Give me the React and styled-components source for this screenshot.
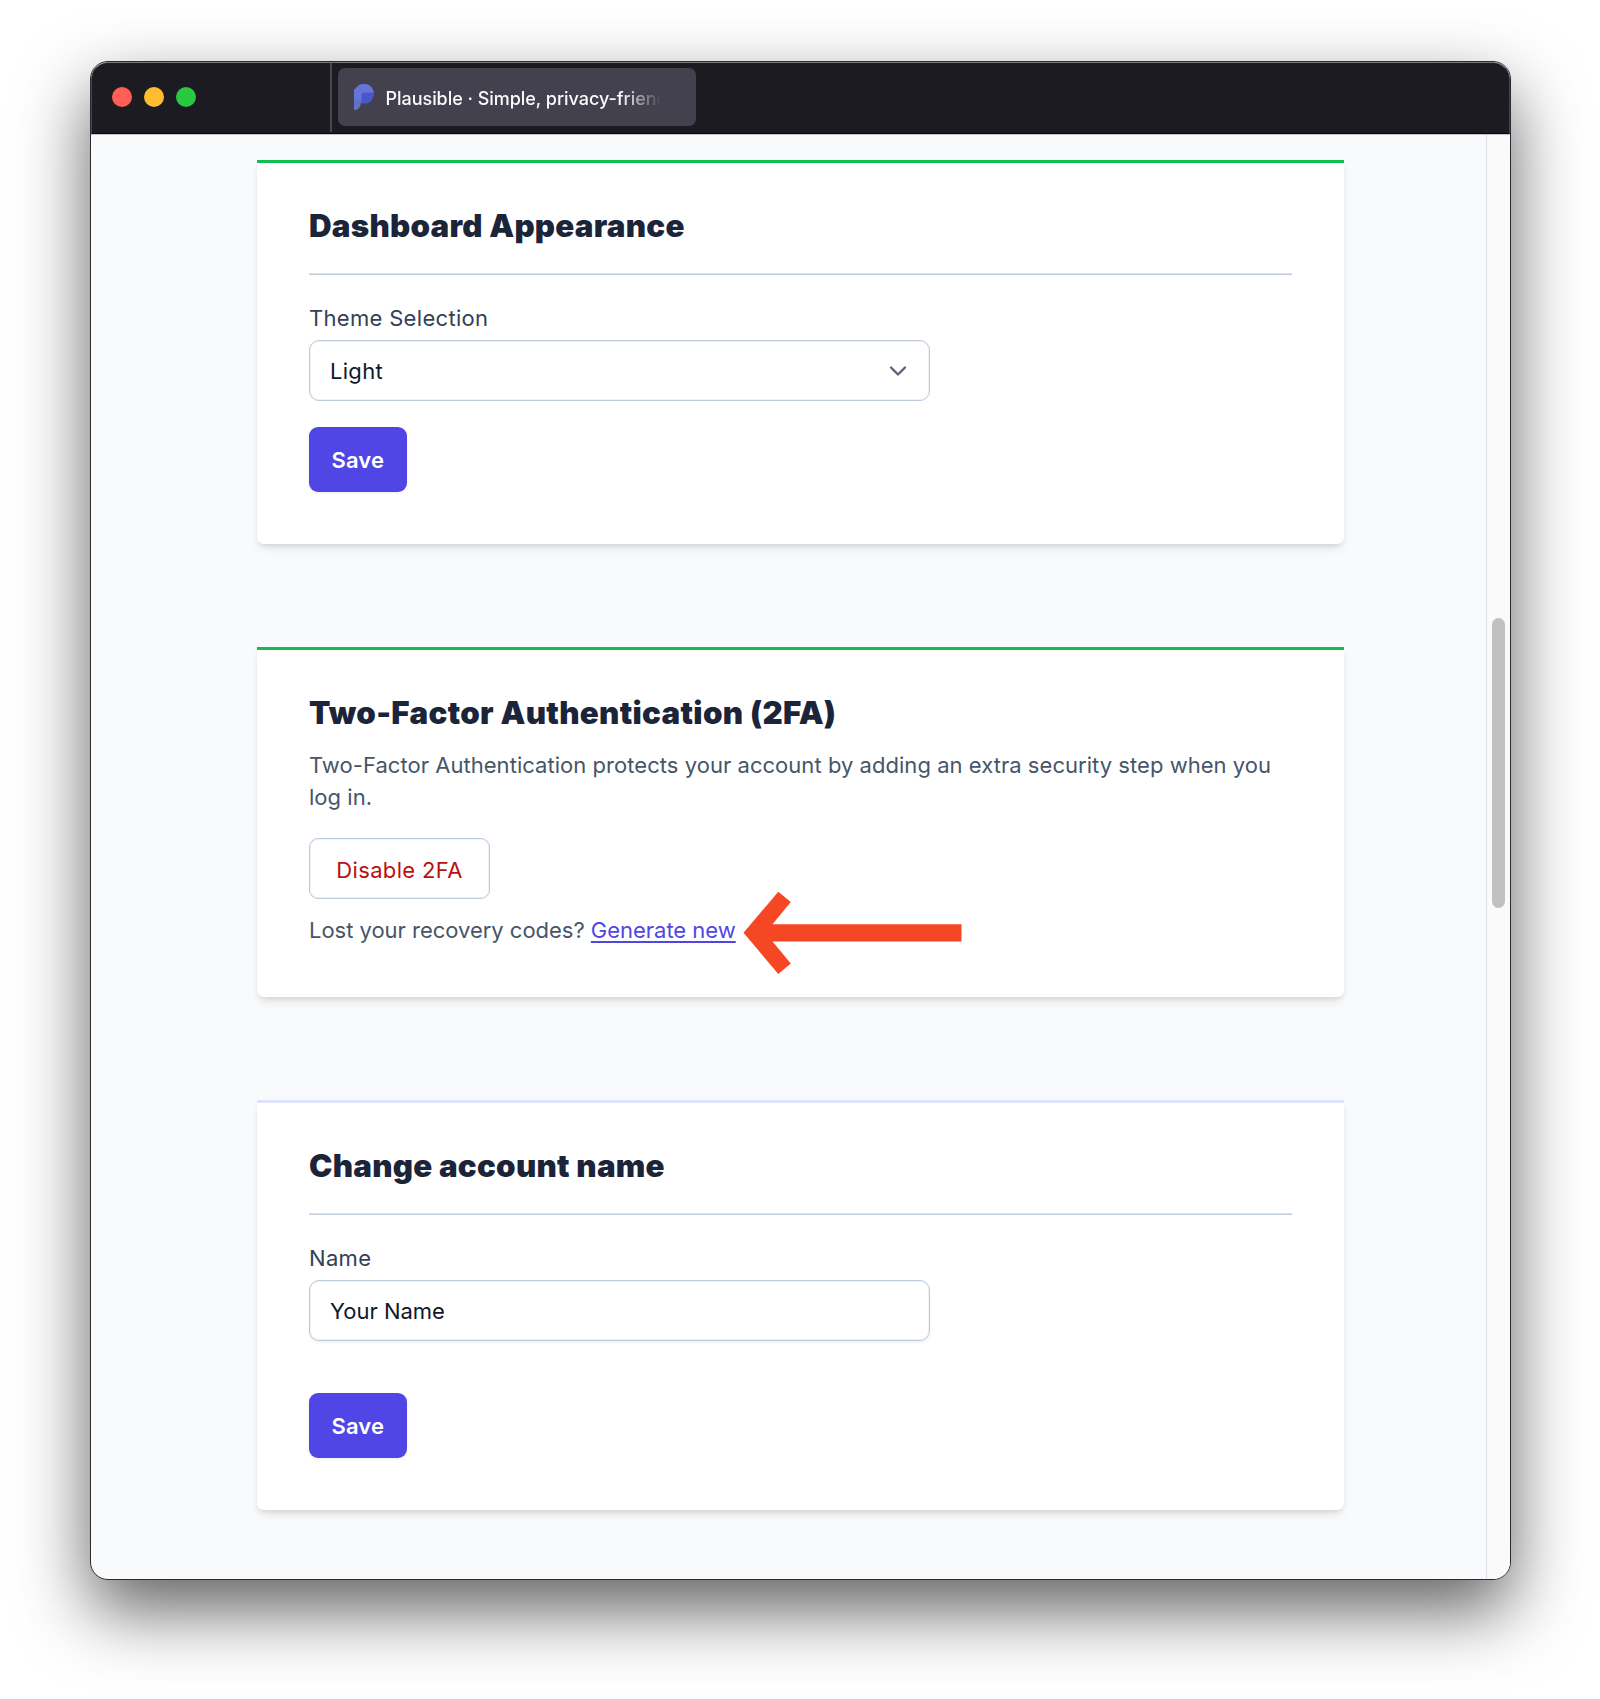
import React from "react";
import styled, { createGlobalStyle } from "styled-components";

const Global = createGlobalStyle`
  *, *::before, *::after { box-sizing: border-box; }
  body {
    margin: 0;
    background: #fff;
    font-family: Inter, "Liberation Sans", sans-serif;
    -webkit-font-smoothing: antialiased;
  }
  h2, p { margin: 0; }
  button { font: inherit; margin: 0; padding: 0; }
`;

const Desktop = styled.div`
  height: 1699px;
  padding: 61px 89px 119px 90px;
  overflow: hidden;
`;

const Window = styled.div`
  width: 1421px;
  height: 1519px;
  border: 1px solid #2b2c31;
  border-radius: 18px;
  overflow: hidden;
  display: flex;
  flex-direction: column;
  background: #f9fafc;
  box-shadow: 0 30px 70px rgba(0, 0, 0, 0.62);
`;

const TitleBar = styled.div`
  flex: none;
  height: 72px;
  display: flex;
  background: #1c1b22;
  border: 1px solid #44454e;
  border-top-color: #77797c;
  border-bottom-color: #09090d;
  border-radius: 17px 17px 0 0;
`;

const Controls = styled.div`
  width: 240px;
  height: 69px;
  display: flex;
  gap: 12.2px;
  padding: 24px 0 0 20px;
  border-right: 2px solid #45464f;
`;

const Dot = styled.span`
  width: 20px;
  height: 20px;
  border-radius: 50%;
  background: ${(p) => p.$color};
`;

const Tab = styled.div`
  display: flex;
  align-items: center;
  width: 358px;
  height: 58px;
  margin: 5px 0 0 6px;
  padding: 0 20px 0 16px;
  border-radius: 7px;
  background: #42414d;
`;

const TabTitle = styled.div`
  flex: none;
  width: 290px;
  margin: 3px 0 0 11.5px;
  white-space: nowrap;
  color: #fbfbfe;
  font-size: 18px;
  line-height: 24px;
  font-weight: 500;
  letter-spacing: -0.04px;
  mask-image: linear-gradient(to right, #000 235px, transparent 275px);
`;

const Viewport = styled.div`
  flex: 1;
  display: flex;
  border-top: 1px solid #c5c5cc;
`;

const Page = styled.main`
  flex: 1;
  padding: 25px 142px 0 166px;
  display: flex;
  flex-direction: column;
  gap: 103px;
`;

const Scrollbar = styled.div`
  width: 24px;
  border-left: 1px solid #dfe0e3;
  background: #fafafa;
  padding: 483px 0 0 5px;
`;

const Thumb = styled.div`
  width: 13px;
  height: 290px;
  border-radius: 7px;
  background: #c1c1c1;
`;

const Card = styled.section`
  flex: none;
  height: ${(p) => p.$height}px;
  padding: 47px 52px 0;
  border-top: 3px solid ${(p) => p.$accent};
  border-radius: 0 0 7px 7px;
  background: #fff;
  box-shadow: 0 6px 10px -2px rgba(0, 0, 0, 0.1), 0 3px 6px -3px rgba(0, 0, 0, 0.12);
`;

const Heading = styled.h2`
  font-size: 31.3px;
  line-height: 32px;
  font-weight: 900;
  letter-spacing: ${(p) => p.$tracking ?? 0.25}px;
  color: #1b2438;
  white-space: nowrap;
`;

const Rule = styled.div`
  height: 2px;
  margin: 31px 0 27px;
  background: linear-gradient(#dbe2eb 50%, #c3cedc 50%);
`;

const Label = styled.div`
  font-size: 22px;
  line-height: 32px;
  letter-spacing: 0.31px;
  color: #334155;
`;

const Field = styled.div`
  width: 621px;
  height: 61px;
  margin-top: 6px;
  padding: 0 22px 0 20px;
  display: flex;
  align-items: center;
  justify-content: space-between;
  border: 1px solid #bccadb;
  border-radius: 10px;
  background: #fff;
  box-shadow: inset 0 0 0 1px rgba(203, 213, 225, 0.3), 0 2px 3px rgba(0, 0, 0, ${(p) => (p.$raised ? 0.05 : 0)});
  font-size: 22px;
  letter-spacing: ${(p) => p.$tracking || 0}px;
  color: #0f172a;
`;

const SaveButton = styled.button`
  display: block;
  width: 97.5px;
  height: 65px;
  margin-top: ${(p) => p.$gap}px;
  border: 0;
  border-radius: 9px;
  background: #4f46e5;
  box-shadow: 0 1px 3px rgba(0, 0, 0, 0.08);
  color: #fff;
  font-size: 22px;
  font-weight: 600;
  letter-spacing: 0.1px;
`;

const Text = styled.p`
  position: relative;
  margin-top: ${(p) => p.$gap}px;
  font-size: 22px;
  line-height: 32px;
  letter-spacing: ${(p) => p.$tracking}px;
  color: #475569;
`;

const OutlineButton = styled.button`
  display: block;
  width: 181px;
  height: 61px;
  margin-top: 25px;
  padding-top: 2px;
  border: 1px solid #bccadb;
  border-radius: 9px;
  box-shadow: inset 0 0 0 1px rgba(203, 213, 225, 0.3);
  background: #fff;
  color: #b91010;
  font-size: 22px;
  letter-spacing: 0.36px;
`;

const Link = styled.a`
  color: #4f46e5;
  text-decoration: underline;
  text-decoration-thickness: 1.6px;
  text-underline-offset: 3px;
  text-decoration-skip-ink: none;
`;

const Pointer = styled.svg`
  position: absolute;
  left: 434px;
  top: -23px;
`;

const LogoMark = styled.svg`
  flex: none;
`;

const Logo = () => (
  <LogoMark width="20" height="26" viewBox="0 0 20 26">
    <path d="M0 6 4.6 1.2Q6 0 10 0C15 0 18 2.5 19.5 7v5L8 19H0Z" fill="#6775d8" />
    <path d="M9.5 8.8h10v2.4C19.2 16 15.5 19.5 11 19.5H6.5L7.5 16v-5Q7.5 8.8 9.5 8.8Z" fill="#4658ca" />
    <path d="M0 15.5h3.6C6 16.5 6.8 18 6.6 20.2 6.2 23.8 3.5 26 0 26Z" fill="#6270c6" />
  </LogoMark>
);

const Chevron = () => (
  <svg width="18" height="12" viewBox="0 0 18 12" fill="none">
    <path d="m2 2.5 7 7 7-7" stroke="#596277" strokeWidth="2.4" strokeLinecap="round" strokeLinejoin="round" />
  </svg>
);

const Arrow = () => (
  <Pointer width="220" height="84" viewBox="0 0 220 84">
    <path d="M.5 41.8 35.3.7 47.8 11 29.5 33.2H218.5V50.4H29.5L47.8 72.5 35.3 83Z" fill="#f64724" />
  </Pointer>
);

export default function App() {
  return (
    <>
      <Global />
      <Desktop>
        <Window>
          <TitleBar>
            <Controls>
              <Dot $color="#ff5f57" />
              <Dot $color="#febc2e" />
              <Dot $color="#28c840" />
            </Controls>
            <Tab>
              <Logo />
              <TabTitle>Plausible · Simple, privacy-friend</TabTitle>
            </Tab>
          </TitleBar>
          <Viewport>
            <Page>
              <Card $height={384} $accent="#12bc50">
                <Heading>Dashboard Appearance</Heading>
                <Rule />
                <Label>Theme Selection</Label>
                <Field $tracking={0.3}>
                  Light
                  <Chevron />
                </Field>
                <SaveButton $gap={26}>Save</SaveButton>
              </Card>
              <Card $height={350} $accent="#12bc50">
                <Heading $tracking={0.3}>Two-Factor Authentication (2FA)</Heading>
                <Text $gap={20} $tracking={0.04}>
                  Two-Factor Authentication protects your account by adding an extra security step when you
                  log in.
                </Text>
                <OutlineButton>Disable 2FA</OutlineButton>
                <Text $gap={15} $tracking={-0.02}>
                  Lost your recovery codes? <Link>Generate new</Link>
                  <Arrow />
                </Text>
              </Card>
              <Card $height={410} $accent="#e0e3fd">
                <Heading>Change account name</Heading>
                <Rule />
                <Label>Name</Label>
                <Field $raised>Your Name</Field>
                <SaveButton $gap={52}>Save</SaveButton>
              </Card>
            </Page>
            <Scrollbar>
              <Thumb />
            </Scrollbar>
          </Viewport>
        </Window>
      </Desktop>
    </>
  );
}
